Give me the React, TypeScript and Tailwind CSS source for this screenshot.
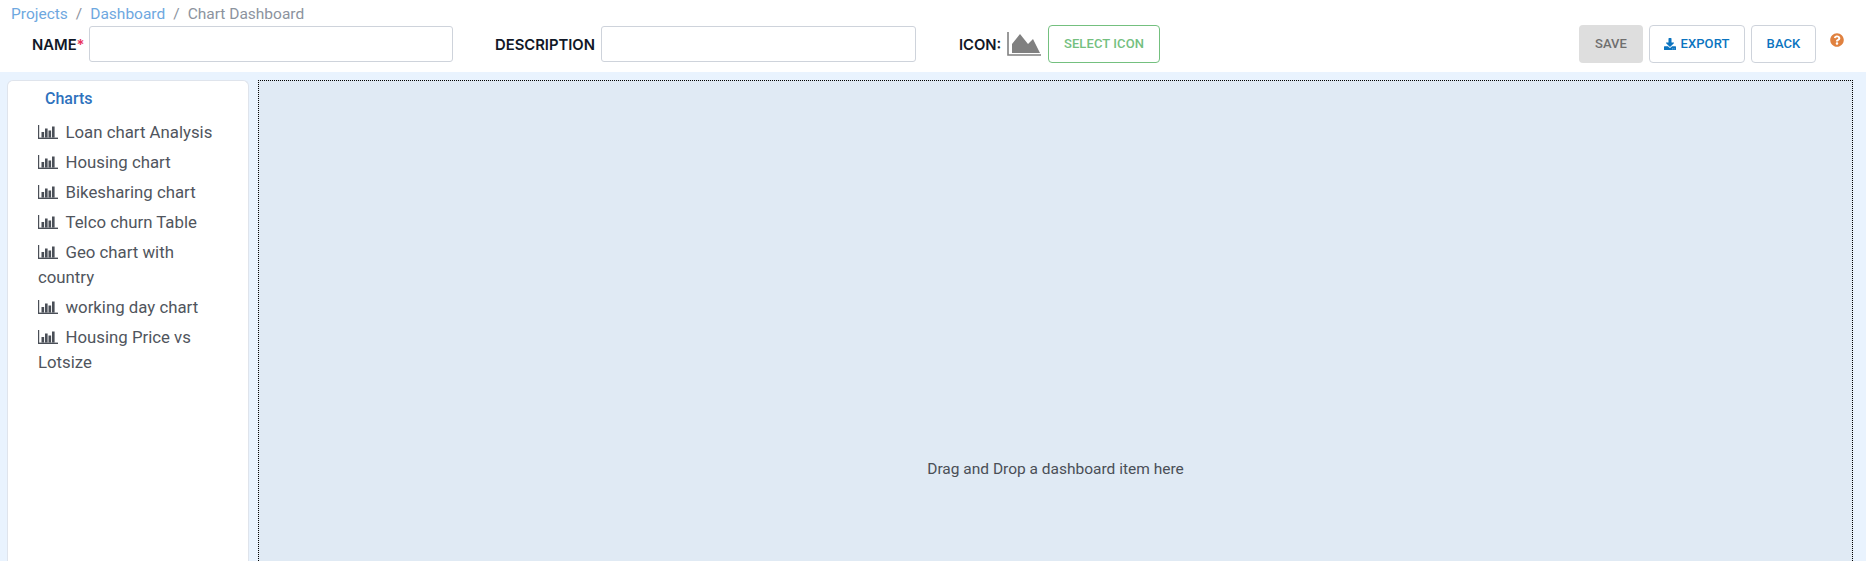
import React from "react";
import { FaQuestionCircle, FaDownload } from "react-icons/fa";

function BarIcon() {
  return (
    <svg width="20" height="14" viewBox="0 0 20 14" className="inline-block align-[-1px]" fill="#4a4f57">
      <rect x="0" y="0" width="1.2" height="14" />
      <rect x="0" y="12.6" width="20" height="1.4" />
      <rect x="3.5" y="7" width="2.6" height="5.6" />
      <rect x="7" y="3.5" width="2.6" height="9.1" />
      <rect x="10.5" y="5.5" width="2.6" height="7.1" />
      <rect x="14" y="1.5" width="2.6" height="11.1" />
    </svg>
  );
}

function AreaIcon() {
  return (
    <svg width="34" height="24" viewBox="0 0 34 24" className="shrink-0">
      <path d="M5 21 V12 L13 2 L21 12 L26 7 L33 21 Z" fill="#808080" />
      <path d="M1 0 V23 H34" fill="none" stroke="#808080" strokeWidth="1.6" />
    </svg>
  );
}

const items: [string, string?][] = [
  ["Loan chart Analysis"],
  ["Housing chart"],
  ["Bikesharing chart"],
  ["Telco churn Table"],
  ["Geo chart with", "country"],
  ["working day chart"],
  ["Housing Price vs", "Lotsize"],
];

const labelFont = "font-['Inter',sans-serif] font-semibold text-[14.8px] text-[#111827] pt-[2px]";

export default function App() {
  return (
    <div className="h-[561px] w-[1866px] overflow-hidden flex flex-col bg-[#e9f3fe] font-['Roboto',sans-serif]">
      <header className="h-[72px] bg-white shrink-0">
        <nav className="h-[25px] pt-[4px] pl-[11px] flex items-center text-[15.5px] leading-[23px] text-[#8c939e]">
          <span className="text-[#6ea8e0]">Projects</span>
          <span className="mx-[8px]">/</span>
          <span className="text-[#6ea8e0]">Dashboard</span>
          <span className="mx-[8px]">/</span>
          <span>Chart Dashboard</span>
        </nav>
        <div className="h-[38px] flex items-center">
          <label className={`${labelFont} ml-[32px] w-[57px] shrink-0`}>
            NAME<span className="text-[#e8335a]">*</span>
          </label>
          <input className="w-[364px] h-[36px] border border-[#ced3db] rounded-[3px] bg-white" />
          <label className={`${labelFont} ml-[42px] w-[106px] shrink-0`}>DESCRIPTION</label>
          <input className="w-[315px] h-[36px] border border-[#ced3db] rounded-[3px] bg-white" />
          <label className={`${labelFont} ml-[43px] w-[48px] shrink-0`}>ICON:</label>
          <AreaIcon />
          <button className="ml-[7px] w-[112px] h-[38px] border border-[#74c07f] rounded-[4px] text-[#74c07f] text-[13px] font-medium tracking-[0.1px]">
            SELECT ICON
          </button>
          <div className="ml-auto flex items-center gap-[6px] mr-[50px]">
            <button className="w-[64px] h-[38px] bg-[#dedede] rounded-[4px] text-[#6f6f6f] text-[13px] font-medium tracking-[0.1px]">
              SAVE
            </button>
            <button className="w-[96px] h-[38px] bg-white border border-[#ced3db] rounded-[4px] text-[#0b74c0] text-[13px] font-medium tracking-[0.1px] flex items-center justify-center gap-[4px]">
              <FaDownload size={12} />
              EXPORT
            </button>
            <button className="w-[65px] h-[38px] bg-white border border-[#ced3db] rounded-[4px] text-[#0b74c0] text-[13px] font-medium tracking-[0.1px]">
              BACK
            </button>
          </div>
        </div>
      </header>
      <FaQuestionCircle size={14} color="#e0813f" className="absolute left-[1830px] top-[33px]" />
      <main className="flex-1 min-h-0 flex pt-[8px] pl-[7px] pr-[13px] gap-[9px]">
        <aside className="w-[242px] shrink-0 bg-white border border-[#dfe4ec] border-b-0 rounded-t-[6px]">
          <h2 className="ml-[37px] mt-[8px] h-[20px] text-[#2f72bd] text-[16px] leading-[20px] font-medium">Charts</h2>
          <ul className="mt-[11px] ml-[30px] mr-[20px] flex flex-col gap-[5px] text-[16.8px] leading-[25px] text-[#50555d]">
            {items.map(([a, b]) => (
              <li key={a}>
                <BarIcon />
                <span className="ml-[7.5px]">{a}</span>
                {b && <div>{b}</div>}
              </li>
            ))}
          </ul>
        </aside>
        <section className="flex-1 bg-[#e0eaf4] border border-dotted border-black border-b-0 flex justify-center pt-[378px]">
          <p className="text-[15.5px] leading-[20px] text-[#4a4f57] h-[20px]">Drag and Drop a dashboard item here</p>
        </section>
      </main>
    </div>
  );
}
